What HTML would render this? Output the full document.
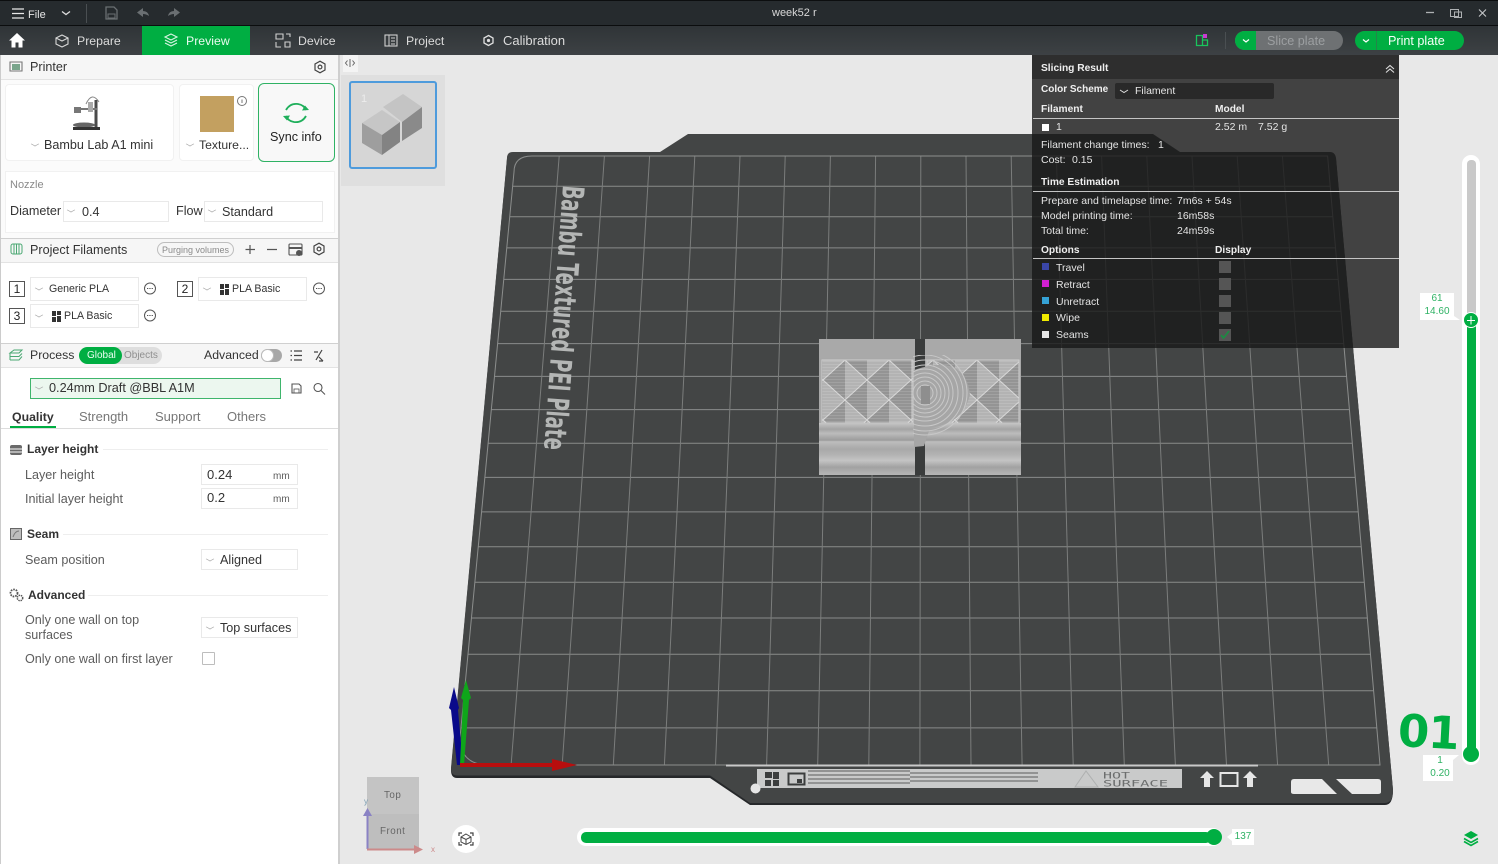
<!DOCTYPE html>
<html><head><meta charset="utf-8"><title>week52 r</title>
<style>
*{box-sizing:border-box}
html,body{margin:0;padding:0}
body{width:1498px;height:864px;overflow:hidden;position:relative;background:#e8e8e8;font-family:"Liberation Sans","DejaVu Sans",sans-serif;color:#333}
.a{position:absolute}
.t{position:absolute;white-space:nowrap;line-height:16px;font-size:12.6px}
.box{position:absolute;background:#fff;border:1px solid #e9e9e9}
.ch{position:absolute;width:6px;height:6px;border-right:1px solid #a8a8a8;border-bottom:1px solid #a8a8a8;transform:scaleY(.55) rotate(45deg)}
.hd{position:absolute;left:1px;width:337px;background:#f6f6f6;border-top:1px solid #d0d0d0;border-bottom:1px solid #e3e3e3}
.num{position:absolute;width:16px;height:16px;border:1px solid #555;background:#fff;font-size:12px;line-height:14px;text-align:center;color:#222}
.w{color:#e4e4e4;font-size:10.5px}
.b{color:#efefef;font-size:10.2px;font-weight:bold}
.h{font-weight:bold;font-size:12px}
.n{font-size:12.3px;color:#dcdcdc}
.sw{position:absolute;left:1042px;width:7px;height:7px}
.cb{position:absolute;left:1219px;width:12px;height:12px;background:#555}
.hr{position:absolute;left:1033px;width:366px;height:1px;background:#c4c4c4}
svg{position:absolute;left:0;top:0}
.g{color:#5c5c5c}
</style></head><body>

<!-- top bars -->
<div class="a" style="left:0;top:0;width:1498px;height:26px;background:#262b2e;border-top:1px solid #0c0e0f;border-bottom:1px solid #0b0d0e"></div>
<div class="a" style="left:0;top:26px;width:1498px;height:29px;background:linear-gradient(#2f3437,#3d4144)"></div>
<div class="a" style="left:142px;top:26px;width:108px;height:29px;background:#00ae42"></div>
<div class="a" style="left:86px;top:4px;width:1px;height:19px;background:#4a4f52"></div>
<div class="a" style="left:1225px;top:32px;width:1px;height:17px;background:#4a4f52"></div>

<!-- slice / print buttons -->
<div class="a" style="left:1235px;top:31px;width:108px;height:19px;border-radius:10px;background:#6e7173;overflow:hidden"><div class="a" style="left:0;top:0;width:21px;height:19px;background:#00ae42"></div></div>
<div class="a" style="left:1355px;top:31px;width:109px;height:19px;border-radius:10px;background:#00ae42"></div>
<div class="a" style="left:1376px;top:31px;width:1px;height:19px;background:#24854a"></div>

<!-- plate -->
<svg width="1498" height="864" viewBox="0 0 1498 864">
<defs>
<clipPath id="ci"><path d="M514 172Q514 156 532 156L1327.6 156L1380 765L484 765Q460 762 460 738Z"/></clipPath>
<clipPath id="disc"><rect x="913" y="355" width="62" height="92"/></clipPath>
<pattern id="dia" x="823" y="340" width="44" height="40" patternUnits="userSpaceOnUse">
<rect width="44" height="40" fill="#b3b3b3"/>
<polygon points="0,0 22,0 22,20" fill="#949494"/>
<polygon points="0,40 22,40 22,20" fill="#949494"/>
<polygon points="44,0 22,20 44,40" fill="#949494"/>
<path d="M0 0L44 40M44 0L0 40" fill="none" stroke="#d8d8d8" stroke-width="1"/>
</pattern>
<pattern id="grain" width="3" height="3" patternUnits="userSpaceOnUse"><path d="M0 1.500H3" stroke="#ffffff" stroke-opacity=".12" stroke-width="1"/></pattern>
<linearGradient id="st" x1="0" y1="0" x2="0" y2="1">
<stop offset="0" stop-color="#c6c6c6"/><stop offset=".12" stop-color="#a4a4a4"/><stop offset=".2" stop-color="#bcbcbc"/><stop offset=".33" stop-color="#9c9c9c"/><stop offset=".36" stop-color="#bdbdbd"/><stop offset=".5" stop-color="#a8a8a8"/><stop offset=".62" stop-color="#b4b4b4"/><stop offset=".72" stop-color="#c4c4c4"/><stop offset=".85" stop-color="#a2a2a2"/><stop offset="1" stop-color="#b6b6b6"/>
</linearGradient>
</defs>
<path d="M507 159Q507 153.500 513 153.500L660 153.500L688 135.500L1153 135.500L1180 153.500L1330 153.500Q1335 153.500 1336 159L1393 790Q1393 805 1385 805L750 805L710 778L457 778Q451 778 451 770Z" fill="#26282a"/>
<path d="M507 158Q507 152 513 152L660 152L688 134L1153 134L1180 152L1330 152Q1335 152 1336 158L1393 790Q1393 803 1385 803L750 803L710 775.500L457 775.500Q451 775.500 451 768Z" fill="#434545"/>
<g clip-path="url(#ci)" stroke-width="1" fill="none">
<path stroke="#898b8a" d="M440 186.200H1400M440 216.800H1400M440 247.900H1400M440 279.400H1400M440 311.300H1400M440 343.600H1400M440 376.400H1400M440 409.600H1400M440 443.300H1400M440 477.400H1400M440 511.900H1400M440 546.800H1400M440 582.200H1400M440 618H1400M440 654.200H1400M440 690.800H1400M440 727.900H1400"/>
<path stroke="#7b7d7c" d="M559.200 156L511.100 765M604.400 156L562.200 765M649.600 156L613.300 765M694.800 156L664.400 765M740 156L715.500 765M785.200 156L766.600 765M830.400 156L817.700 765M875.600 156L868.800 765M920.800 156L919.900 765M966 156L971 765M1011.200 156L1022.100 765M1056.400 156L1073.200 765M1101.600 156L1124.300 765M1146.800 156L1175.400 765M1192 156L1226.500 765M1237.200 156L1277.600 765M1282.400 156L1328.700 765"/>
</g>
<path d="M514 172Q514 156 532 156L1327.600 156L1380 765L484 765Q460 762 460 738Z" fill="none" stroke="#8c8e8d" stroke-width="1"/>
<path d="M726 765.500H1258" stroke="#c9c9c9" stroke-width="2"/>
<text transform="translate(563,185) rotate(94.100)" font-family="'DejaVu Sans','Liberation Sans',sans-serif" font-weight="bold" font-size="30" fill="#b4b6b5" textLength="265" lengthAdjust="spacingAndGlyphs">Bambu Textured PEI Plate</text>

<!-- bottom strip -->
<rect x="757" y="769" width="425" height="19" fill="#c9caca"/>
<circle cx="755.500" cy="788.500" r="5" fill="#e6e6e6"/>
<path d="M808 771H910M808 775H910M808 779H910M808 783H910M910 773H1038M910 777H1038M910 781H1038" stroke="#5a5c5c" stroke-width="1"/>
<g fill="#3b3d3d"><rect x="765" y="772" width="7" height="6"/><rect x="773" y="772" width="6" height="7"/><rect x="765" y="780" width="6" height="6"/><rect x="773" y="780" width="6" height="6"/></g>
<rect x="788.500" y="773.500" width="16" height="11" fill="none" stroke="#3b3d3d" stroke-width="2"/><rect x="797" y="779" width="5" height="4" fill="#3b3d3d"/>
<path d="M1075 787L1086 771L1098 787Z" fill="none" stroke="#aeb0b0" stroke-width="1"/>
<text x="1103" y="778.500" font-size="9" fill="#6c6e6e" font-family="'DejaVu Sans Mono','Liberation Mono',monospace" textLength="27" lengthAdjust="spacingAndGlyphs">HOT</text>
<text x="1103" y="786.500" font-size="9" fill="#6c6e6e" font-family="'DejaVu Sans Mono','Liberation Mono',monospace" textLength="65" lengthAdjust="spacingAndGlyphs">SURFACE</text>
<g fill="#e6e6e6"><path d="M1200 778L1207 771L1214 778H1210V787H1204V778Z"/><path d="M1243 778L1250 771L1257 778H1253V787H1247V778Z"/></g>
<rect x="1220.500" y="773" width="17" height="13" fill="none" stroke="#e6e6e6" stroke-width="2"/>
<path d="M1291 782Q1291 779 1294 779L1322 779L1337 794H1294Q1291 794 1291 792Z" fill="#e8e8e8"/>
<path d="M1336 779H1378Q1381 779 1381 782V792Q1381 794 1378 794H1352Z" fill="#e8e8e8"/>

<!-- model -->
<rect x="915" y="339" width="10" height="136" fill="#3a3c3c"/>
<rect x="819" y="339" width="96" height="21" fill="#a9a9a9"/>
<rect x="925" y="339" width="96" height="21" fill="#a9a9a9"/>
<rect x="819" y="358" width="96" height="66" fill="#a8a8a8"/>
<rect x="925" y="358" width="96" height="66" fill="#a8a8a8"/>
<rect x="822" y="360" width="91" height="63" fill="url(#dia)"/>
<rect x="927" y="360" width="92" height="63" fill="url(#dia)"/>
<rect x="822" y="360" width="91" height="63" fill="url(#grain)"/>
<rect x="927" y="360" width="92" height="63" fill="url(#grain)"/>
<rect x="822" y="360" width="91" height="63" fill="none" stroke="#cfcfcf"/>
<rect x="927" y="360" width="92" height="63" fill="none" stroke="#cfcfcf"/>
<rect x="819" y="423" width="96" height="52" fill="url(#st)"/>
<rect x="925" y="423" width="96" height="52" fill="url(#st)"/>
<g clip-path="url(#disc)">
<path d="M914 370Q965 352 970 395Q962 424 930 428L924 446L914 447Z" fill="#a6a6a6"/>
<g fill="none" stroke="#c8c8c8" stroke-width="1"><circle cx="925" cy="393" r="8"/><circle cx="925" cy="393" r="12"/><circle cx="925" cy="393" r="16"/><circle cx="925" cy="393" r="20"/><circle cx="925" cy="393" r="24"/><circle cx="925" cy="393" r="28"/><circle cx="925" cy="393" r="33"/><circle cx="925" cy="393" r="38"/><circle cx="925" cy="393" r="42"/></g>
</g>
<rect x="921" y="386" width="9" height="18" fill="#8e8e8e"/>

<!-- axes -->
<path d="M457 765L451 710 449 708 454 687 459 708 458 710 463 765Z" fill="#0a0a8a"/>
<path d="M460 765L463 700 461 698 466 680 471 698 469 700 464 765Z" fill="#0fa61a"/>
<path d="M460 763H552L552 759 577 765 552 771V767H460Z" fill="#b80e0e"/>
</svg>

<!-- thumbnail column -->
<div class="a" style="left:341px;top:75px;width:104px;height:111px;background:#dfdfdf"></div>
<div class="a" style="left:349px;top:81px;width:88px;height:88px;background:#d6d6d6;border:2px solid #4e9bdc;border-radius:3px"></div>
<div class="a" style="left:343px;top:55px;width:15px;height:17px;background:#f4f4f4"></div>
<svg width="1498" height="864" viewBox="0 0 1498 864">
<path d="M383 107L403 94L422 107L402 122Z" fill="#c4c4c4"/><path d="M402 122L422 107V128L402 141Z" fill="#8a8a8a"/>
<path d="M362 123L382 110L400 122L382 135Z" fill="#c6c6c6"/><path d="M362 123L382 135V155L362 143Z" fill="#9e9e9e"/><path d="M382 135L400 122V142L382 155Z" fill="#838383"/>
<path d="M347.500 60.500L345.500 63L347.500 65.500M352.500 60.500L354.500 63L352.500 65.500M350 59V67" fill="none" stroke="#666" stroke-width="1"/>
</svg>

<!-- sidebar -->
<div class="a" style="left:0;top:55px;width:340px;height:809px;background:#fff;border-left:1px solid #ccc;border-right:2px solid #cfcfcf"></div>
<div class="hd" style="top:55px;height:25px;border-top:0"></div>
<div class="a" style="left:1px;top:80px;width:337px;height:158px;background:#fbfbfb"></div>
<div class="box" style="left:5px;top:84px;width:169px;height:77px;border-color:#f1f1f1;border-radius:4px"></div>
<div class="box" style="left:179px;top:84px;width:75px;height:77px;border-color:#f1f1f1;border-radius:4px"></div>
<div class="a" style="left:258px;top:83px;width:77px;height:79px;background:#f8f8f8;border:1px solid #2fb264;border-radius:6px"></div>
<div class="box" style="left:5px;top:171px;width:330px;height:62px;border-color:#f1f1f1"></div>
<div class="box" style="left:63px;top:201px;width:106px;height:21px"></div>
<div class="box" style="left:204px;top:201px;width:119px;height:21px"></div>

<div class="hd" style="top:238px;height:25px"></div>
<div class="a" style="left:1px;top:263px;width:337px;height:80px;background:#fff"></div>
<div class="box" style="left:30px;top:277px;width:109px;height:24px"></div>
<div class="box" style="left:198px;top:277px;width:109px;height:24px"></div>
<div class="box" style="left:30px;top:304px;width:109px;height:24px"></div>
<div class="num" style="left:9px;top:281px">1</div>
<div class="num" style="left:177px;top:281px">2</div>
<div class="num" style="left:9px;top:308px">3</div>

<div class="hd" style="top:343px;height:25px"></div>
<div class="a" style="left:79px;top:347px;width:83px;height:17px;background:#dedede;border-radius:9px"></div>
<div class="a" style="left:79px;top:347px;width:43px;height:17px;background:#00ae42;border-radius:9px"></div>
<div class="a" style="left:261px;top:349px;width:21px;height:13px;background:#a8a8a8;border-radius:7px"></div>
<div class="a" style="left:261px;top:349px;width:13px;height:13px;background:#fff;border:1px solid #bbb;border-radius:50%"></div>
<div class="a" style="left:157px;top:242px;width:77px;height:15px;border:1px solid #bdbdbd;border-radius:8px"></div>

<div class="a" style="left:30px;top:378px;width:251px;height:21px;background:#ecf7ef;border:1px solid #3fb56c"></div>
<div class="a" style="left:1px;top:428px;width:337px;height:1px;background:#dcdcdc"></div>
<div class="a" style="left:10px;top:426px;width:46px;height:2px;background:#00ae42"></div>
<div class="a" style="left:103px;top:449px;width:225px;height:1px;background:#eeeeee"></div>
<div class="a" style="left:63px;top:534px;width:265px;height:1px;background:#eeeeee"></div>
<div class="a" style="left:88px;top:595px;width:240px;height:1px;background:#eeeeee"></div>
<div class="box" style="left:201px;top:464px;width:97px;height:21px"></div>
<div class="box" style="left:201px;top:488px;width:97px;height:21px"></div>
<div class="box" style="left:201px;top:549px;width:97px;height:21px"></div>
<div class="box" style="left:201px;top:617px;width:97px;height:21px"></div>
<div class="a" style="left:202px;top:652px;width:13px;height:13px;border:1px solid #bdbdbd;border-radius:1px;background:#fff"></div>

<!-- chevrons in fields -->
<div class="ch" style="left:32px;top:141px"></div><div class="ch" style="left:187px;top:141px"></div>
<div class="ch" style="left:68px;top:207px"></div><div class="ch" style="left:209px;top:207px"></div>
<div class="ch" style="left:36px;top:285px"></div><div class="ch" style="left:204px;top:285px"></div><div class="ch" style="left:36px;top:312px"></div>
<div class="ch" style="left:36px;top:384px"></div>
<div class="ch" style="left:207px;top:556px"></div><div class="ch" style="left:207px;top:624px"></div>

<!-- slicing panel -->
<div class="a" style="left:1032px;top:55px;width:367px;height:293px;background:rgba(24,24,24,.8)"></div>
<div class="a" style="left:1032px;top:55px;width:367px;height:24px;background:rgba(10,10,10,.35)"></div>
<div class="a" style="left:1115px;top:83px;width:159px;height:16px;background:rgba(10,10,10,.45);border-radius:2px"></div>
<div class="hr" style="top:118px"></div><div class="hr" style="top:191px"></div><div class="hr" style="top:258px"></div>
<div class="a" style="left:1042px;top:124px;width:7px;height:7px;background:#fff"></div>
<div class="sw" style="top:263px;background:#3a46a8"></div>
<div class="sw" style="top:280px;background:#d21fd2"></div>
<div class="sw" style="top:297px;background:#35a2d6"></div>
<div class="sw" style="top:314px;background:#f0ea00"></div>
<div class="sw" style="top:331px;background:#e6e6e6"></div>
<div class="cb" style="top:261px"></div><div class="cb" style="top:278px"></div><div class="cb" style="top:295px"></div><div class="cb" style="top:312px"></div><div class="cb" style="top:329px"></div>

<!-- sliders -->
<div class="a" style="left:1462px;top:155px;width:18px;height:610px;background:#fff;border-radius:9px"></div>
<div class="a" style="left:1467px;top:160px;width:9px;height:162px;background:#c9c9c9;border-radius:4px 4px 0 0"></div>
<div class="a" style="left:1467px;top:322px;width:9px;height:432px;background:#00ae42"></div>
<div class="a" style="left:1463px;top:312px;width:16px;height:16px;border-radius:50%;background:#00ae42;border:1px solid #fff"></div>
<div class="a" style="left:1463px;top:746px;width:16px;height:16px;border-radius:50%;background:#00ae42"></div>
<div class="a" style="left:1420px;top:293px;width:34px;height:27px;background:#fff"></div>
<div class="a" style="left:1423px;top:755px;width:30px;height:26px;background:#fff"></div>
<div class="a" style="left:577px;top:828px;width:645px;height:18px;background:#fff;border-radius:9px"></div>
<div class="a" style="left:581px;top:832px;width:630px;height:11px;background:#00ae42;border-radius:5px"></div>
<div class="a" style="left:1206px;top:829px;width:16px;height:16px;border-radius:50%;background:#00ae42"></div>
<div class="a" style="left:1232px;top:829px;width:22px;height:16px;background:#fff"></div>

<!-- view cube -->
<div class="a" style="left:367px;top:777px;width:52px;height:37px;background:#c4c4c4"></div>
<div class="a" style="left:367px;top:814px;width:52px;height:36px;background:#bebebe"></div>
<div class="a" style="left:452px;top:825px;width:28px;height:28px;border-radius:50%;background:#fff"></div>

<!-- icons -->
<svg width="1498" height="864" viewBox="0 0 1498 864" fill="none">
<!-- menu -->
<path d="M12 9H24M12 13.500H24M12 18H24" stroke="#e8e8e8" stroke-width="1.300"/>
<path d="M62 11.500L66 14.500L70 11.500" stroke="#ddd" stroke-width="1.300"/>
<path d="M106 7H114L117 10V19H106Z" stroke="#6a6f72" stroke-width="1.300"/><path d="M108 14H115V18H108Z" stroke="#6a6f72"/>
<path d="M137 12.500L143 8V11Q148 11 149 16Q146 14 143 14V17Z" fill="#6a6f72"/>
<path d="M180 12.500L174 8V11Q169 11 168 16Q171 14 174 14V17Z" fill="#6a6f72"/>
<!-- win -->
<path d="M1426 12.500H1434" stroke="#aeb1b3" stroke-width="1.300"/>
<rect x="1450.500" y="9.500" width="8" height="7" stroke="#aeb1b3"/><rect x="1454.500" y="12" width="7" height="5.500" stroke="#aeb1b3"/>
<path d="M1479 9.500L1486 16.500M1486 9.500L1479 16.500" stroke="#c4c6c8" stroke-width="1.100"/>
<!-- home -->
<path d="M17 33L9 40.500H11.500V47.500H15.500V42.500H18.500V47.500H22.500V40.500H25Z" fill="#fff"/>
<!-- prepare -->
<path d="M62 35L68 38V44L62 47L56 44V38Z M56 38L62 41L68 38M62 41" stroke="#d8d8d8" stroke-width="1.100"/>
<!-- preview -->
<path d="M171 34L177 37L171 40L165 37Z M165 40L171 43L177 40M165 43L171 46L177 43" stroke="#d9f5e3" stroke-width="1.100"/>
<!-- device -->
<path d="M276 34H283V39H276ZM286 34H290V37M276 42V47H281M285 42H290V47H285Z" stroke="#d0d0d0" stroke-width="1.100"/>
<!-- project -->
<rect x="385" y="35" width="12" height="11" stroke="#d0d0d0" stroke-width="1.100"/><path d="M389 35V46M391 38H395M391 41H395M391 44H395" stroke="#d0d0d0"/>
<!-- calibration -->
<path d="M488.500 35.500L493 38V43L488.500 45.500L484 43V38Z" stroke="#e0e0e0" stroke-width="1.300"/><circle cx="488.500" cy="40.500" r="1.600" fill="#e0e0e0"/>
<!-- layout icon -->
<path d="M1196.500 35.500H1202.500V45.500H1196.500ZM1202.500 40H1207.500V45.500H1202.500Z" stroke="#19c45c" stroke-width="1.300"/><rect x="1203" y="34" width="4" height="4" fill="#c83cd0"/>
<!-- btn chevrons -->
<path d="M1243 39.500L1246 42L1249 39.500M1363 39.500L1366 42L1369 39.500" stroke="#fff" stroke-width="1.200"/>
<!-- printer -->
<path d="M10 62H22V71H10Z" stroke="#777" stroke-width="1.100"/><path d="M12 64H20V70H12Z" fill="#7aa58c"/>
<!-- gears -->
<g stroke="#444" stroke-width="1.200">
<path d="M320 61.200L325 64V70L320 72.800L315 70V64Z"/><circle cx="320" cy="67" r="1.900"/>
<path d="M319 243.200L324 246V252L319 254.800L314 252V246Z"/><circle cx="319" cy="249" r="1.900"/>
</g>
<!-- printer figure -->
<g fill="none"><path d="M96 100V129" stroke="#4a4a4a" stroke-width="3"/><path d="M86 104Q92 91 99 102" stroke="#888"/><path d="M76 109H97" stroke="#777" stroke-width="2"/></g>
<rect x="74" y="107" width="7" height="6" fill="#777"/><rect x="88" y="102" width="5" height="10" fill="#aaa"/>
<ellipse cx="84" cy="125" rx="11" ry="2.500" fill="#666"/><rect x="73" y="127" width="27" height="3" fill="#333"/>
<!-- texture plate -->
<rect x="200" y="96" width="34" height="36" fill="#c9a562"/><rect x="200" y="96" width="34" height="36" fill="#b5925a" opacity=".25"/>
<circle cx="242" cy="101" r="4.500" stroke="#777"/><path d="M242 99.500V103" stroke="#777"/>
<!-- sync -->
<path d="M286 110Q290 103 298 104Q304 105 306 110M306 116Q302 123 294 122Q288 121 286 116" stroke="#1faf5b" stroke-width="1.800"/>
<path d="M283 116L290 115.500L287 120.500ZM309 110L302 110.500L305 105.500Z" fill="#1faf5b"/>
<!-- filament icon -->
<rect x="11" y="244" width="11" height="10" rx="2" stroke="#4ba873"/><path d="M14 244V254M16.500 244V254M19 244V254" stroke="#4ba873"/>
<!-- plus minus -->
<path d="M245.500 249.500H255M250 245V254M267 249.500H277" stroke="#555" stroke-width="1.200"/>
<rect x="289" y="244" width="13" height="11" rx="1" stroke="#555" stroke-width="1.100"/><path d="M289 248H302" stroke="#555" stroke-width="2"/><circle cx="299" cy="253" r="3" fill="#555"/>
<!-- minus circles -->
<g stroke="#555"><circle cx="150" cy="288.500" r="5.500"/><circle cx="319" cy="288.500" r="5.500"/><circle cx="150" cy="315.500" r="5.500"/>
<path d="M147 288.500H153M316 288.500H322M147 315.500H153" stroke-dasharray="1.300 1"/></g>
<!-- BBL glyph -->
<g fill="#333"><rect x="220" y="284" width="4" height="5"/><rect x="225" y="284" width="4" height="4"/><rect x="220" y="290" width="4" height="5"/><rect x="225" y="289" width="4" height="6"/>
<rect x="52" y="311" width="4" height="5"/><rect x="57" y="311" width="4" height="4"/><rect x="52" y="317" width="4" height="5"/><rect x="57" y="316" width="4" height="6"/></g>
<!-- process icon -->
<path d="M10 353L14 350H22L19 353ZM10 356.500H19L22 353.500M10 360H19L22 356.500M10 353V360" stroke="#4ba873" stroke-width="1"/>
<!-- list, percent -->
<path d="M294 351H302M294 355.500H302M294 360H302M290.500 351H292M290.500 355.500H292M290.500 360H292" stroke="#444" stroke-width="1.200"/>
<path d="M314 352H318M322 350L316 360M319 357L323 361M319 361H323" stroke="#444" stroke-width="1.200"/>
<!-- save, search -->
<path d="M292 384H299L301 386V393H292Z" stroke="#555" stroke-width="1.100"/><rect x="294" y="389" width="5" height="4" stroke="#555" stroke-width=".8"/>
<circle cx="318" cy="387.500" r="4" stroke="#555" stroke-width="1.100"/><path d="M321 390.500L325 394.500" stroke="#555" stroke-width="1.100"/>
<!-- section icons -->
<rect x="10" y="445" width="12" height="10" rx="2" fill="#6a6a6a"/><path d="M10 449H22M10 452H22" stroke="#fff"/>
<rect x="10.500" y="528.500" width="11" height="11" fill="#bdbdbd" stroke="#666"/><path d="M13 537Q15 531 19 531" stroke="#777"/>
<circle cx="14" cy="593" r="3.500" stroke="#555" stroke-width="1.800" stroke-dasharray="1.600 1"/><circle cx="20" cy="598" r="2.700" stroke="#555" stroke-width="1.500" stroke-dasharray="1.400 .8"/>
<!-- panel -->
<path d="M1386 69L1390 65.500L1394 69M1386 72.500L1390 69L1394 72.500" stroke="#ddd" stroke-width="1.100"/>
<path d="M1120 90L1124 92.500L1128 90" stroke="#ddd"/>
<path d="M1221 335L1223.500 338L1229 331" stroke="#1d8a43" stroke-width="1.800"/>
<!-- slider plus -->
<path d="M1471 316V324.500M1467 320.500H1475" stroke="#fff"/>
<!-- label tails -->
<path d="M1454 316L1460 320L1450 320Z" fill="#fff"/><path d="M1453 760L1459 755H1450Z" fill="#fff"/><path d="M1232 833L1227 837L1232 841Z" fill="#fff"/>
<!-- view cube arrows -->
<path d="M367.500 849V812" stroke="#8a82c4" stroke-width="2"/><path d="M363 816L367.500 808L372 816Z" fill="#8a82c4"/>
<path d="M367 849.500H416" stroke="#cc8a8a" stroke-width="2"/><path d="M414 845L423 849.500L414 854Z" fill="#cc8a8a"/>
<!-- camera -->
<path d="M459 836V833H462M470 833H473V836M459 842V845H462M470 845H473V842" stroke="#444" stroke-width="1.200"/>
<path d="M466 834L471 837V842L466 844.500L461 842V837ZM461 837L466 839.500L471 837M466 839.500V844.500" stroke="#444" stroke-width="1"/>
<!-- layers btn -->
<path d="M1471 831L1478 835L1471 839L1464 835Z" fill="#00ae42"/><path d="M1464 838.500L1471 842.500L1478 838.500M1464 841.500L1471 845.500L1478 841.500" stroke="#00ae42" stroke-width="1.600"/>
</svg>

<!-- top text -->
<div class="t" style="left:28px;top:7px;font-size:11px;color:#e6e6e6">File</div>
<div class="t" style="left:772px;top:5px;font-size:11px;color:#d8d8d8">week52 r</div>
<div class="t n" style="left:77px;top:33px">Prepare</div>
<div class="t n" style="left:186px;top:33px;color:#e8fbef">Preview</div>
<div class="t n" style="left:298px;top:33px">Device</div>
<div class="t n" style="left:406px;top:33px">Project</div>
<div class="t" style="left:503px;top:33px;color:#dcdcdc;font-size:13px">Calibration</div>
<div class="t" style="left:1267px;top:33px;color:#9c9fa1">Slice plate</div>
<div class="t" style="left:1388px;top:33px;color:#f4fff8">Print plate</div>

<!-- sidebar text -->
<div class="t" style="left:30px;top:59px">Printer</div>
<div class="t" style="left:44px;top:137px">Bambu Lab A1 mini</div>
<div class="t" style="left:199px;top:137px;font-size:12.200px">Texture...</div>
<div class="t" style="left:270px;top:129px;color:#222">Sync info</div>
<div class="t" style="left:10px;top:177px;font-size:11px;color:#8a8a8a">Nozzle</div>
<div class="t" style="left:10px;top:203px">Diameter</div>
<div class="t" style="left:82px;top:204px">0.4</div>
<div class="t" style="left:176px;top:203px">Flow</div>
<div class="t" style="left:222px;top:204px">Standard</div>
<div class="t" style="left:30px;top:242px">Project Filaments</div>
<div class="t" style="left:162px;top:242px;font-size:9px;color:#8a8a8a">Purging volumes</div>
<div class="t" style="left:49px;top:281px;font-size:10.600px">Generic PLA</div>
<div class="t" style="left:232px;top:281px;font-size:10.600px">PLA Basic</div>
<div class="t" style="left:64px;top:308px;font-size:10.600px">PLA Basic</div>
<div class="t" style="left:30px;top:347px;font-size:12.300px">Process</div>
<div class="t" style="left:87px;top:348px;font-size:10px;color:#e9fff1">Global</div>
<div class="t" style="left:124px;top:348px;font-size:10px;color:#8f8f8f">Objects</div>
<div class="t" style="left:204px;top:347px;font-size:12.300px">Advanced</div>
<div class="t" style="left:49px;top:380px;font-size:12.700px">0.24mm Draft @BBL A1M</div>
<div class="t h" style="left:12px;top:409px;font-size:12.300px">Quality</div>
<div class="t" style="left:79px;top:409px;color:#777;font-size:13px">Strength</div>
<div class="t" style="left:155px;top:409px;color:#777;font-size:13px">Support</div>
<div class="t" style="left:227px;top:409px;color:#777;font-size:13px">Others</div>
<div class="t h" style="left:27px;top:441px">Layer height</div>
<div class="t g" style="left:25px;top:467px">Layer height</div>
<div class="t" style="left:207px;top:467px;font-size:13px">0.24</div>
<div class="t g" style="left:273px;top:469px;font-size:10px">mm</div>
<div class="t g" style="left:25px;top:491px">Initial layer height</div>
<div class="t" style="left:207px;top:490px;font-size:13px">0.2</div>
<div class="t g" style="left:273px;top:492px;font-size:10px">mm</div>
<div class="t h" style="left:27px;top:526px">Seam</div>
<div class="t g" style="left:25px;top:552px">Seam position</div>
<div class="t" style="left:220px;top:552px">Aligned</div>
<div class="t h" style="left:28px;top:587px">Advanced</div>
<div class="t g" style="left:25px;top:612px">Only one wall on top</div>
<div class="t g" style="left:25px;top:627px">surfaces</div>
<div class="t" style="left:220px;top:620px">Top surfaces</div>
<div class="t g" style="left:25px;top:651px">Only one wall on first layer</div>

<!-- thumb number -->
<div class="t" style="left:361px;top:91px;font-size:11px;color:#ececec">1</div>
<div class="t" style="left:384px;top:788px;font-size:9.800px;color:#666;letter-spacing:.5px">Top</div>
<div class="t" style="left:380px;top:824px;font-size:9.800px;color:#666;letter-spacing:.5px">Front</div>
<div class="t" style="left:431px;top:842px;font-size:8px;color:#cc8a8a">x</div>
<div class="t" style="left:364px;top:794px;font-size:8px;color:#7a9cb0">y</div>

<!-- panel text -->
<div class="t b" style="left:1041px;top:61px">Slicing Result</div>
<div class="t b" style="left:1041px;top:82px;font-size:10px">Color Scheme</div>
<div class="t w" style="left:1135px;top:83px">Filament</div>
<div class="t b" style="left:1041px;top:102px">Filament</div>
<div class="t b" style="left:1215px;top:102px">Model</div>
<div class="t w" style="left:1056px;top:119px">1</div>
<div class="t w" style="left:1215px;top:119px">2.52 m</div>
<div class="t w" style="left:1258px;top:119px">7.52 g</div>
<div class="t w" style="left:1041px;top:137px">Filament change times:</div>
<div class="t w" style="left:1158px;top:137px">1</div>
<div class="t w" style="left:1041px;top:152px">Cost:</div>
<div class="t w" style="left:1072px;top:152px">0.15</div>
<div class="t b" style="left:1041px;top:175px">Time Estimation</div>
<div class="t w" style="left:1041px;top:193px">Prepare and timelapse time:</div>
<div class="t w" style="left:1177px;top:193px">7m6s + 54s</div>
<div class="t w" style="left:1041px;top:208px">Model printing time:</div>
<div class="t w" style="left:1177px;top:208px">16m58s</div>
<div class="t w" style="left:1041px;top:223px">Total time:</div>
<div class="t w" style="left:1177px;top:223px">24m59s</div>
<div class="t b" style="left:1041px;top:243px">Options</div>
<div class="t b" style="left:1215px;top:243px">Display</div>
<div class="t w" style="left:1056px;top:260px">Travel</div>
<div class="t w" style="left:1056px;top:277px">Retract</div>
<div class="t w" style="left:1056px;top:294px">Unretract</div>
<div class="t w" style="left:1056px;top:310px">Wipe</div>
<div class="t w" style="left:1056px;top:327px">Seams</div>

<!-- slider text -->
<div class="t" style="left:1420px;top:292px;width:34px;text-align:center;font-size:10px;line-height:13px;color:#2fb264">61<br>14.60</div>
<div class="t" style="left:1425px;top:754px;width:30px;text-align:center;font-size:10px;line-height:13px;color:#2fb264">1<br>0.20</div>
<div class="t" style="left:1232px;top:829px;width:22px;text-align:center;font-size:10px;color:#2fb264">137</div>
<div class="t" style="left:1398px;top:708px;font-size:45px;line-height:46px;font-weight:bold;color:#00ae42;font-family:'DejaVu Sans',sans-serif;letter-spacing:-1px;transform:rotate(3deg) scaleX(1);transform-origin:left center">01</div>
</body></html>
